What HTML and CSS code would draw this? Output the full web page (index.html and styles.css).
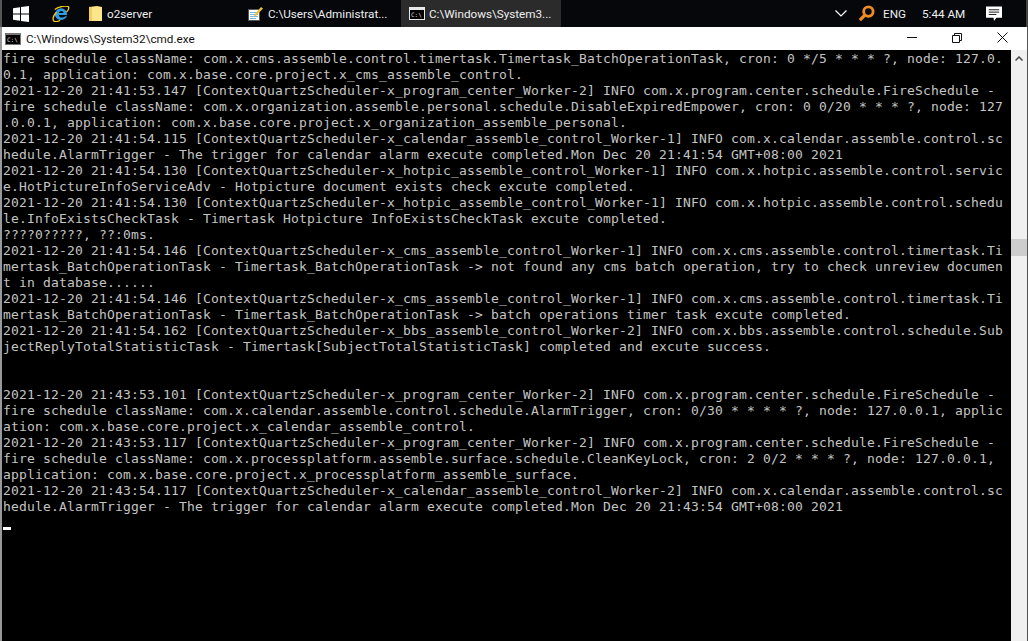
FILE: index.html
```
<!DOCTYPE html>
<html lang="en">
<head>
<meta charset="utf-8">
<title>cmd.exe</title>
<link rel="stylesheet" href="styles.css">
</head>
<body>
<div class="desktop">
  <header class="taskbar">
    <div class="start"><svg width="16" height="16" viewBox="0 0 16 16"><path fill="#fff" d="M0 2.300 7 1.300V7.500H0ZM8 1.100 16 0V7.500H8ZM0 8.500H7V14.700L0 13.700ZM8 8.500H16V16L8 14.900Z"/></svg></div>
    <div class="pin ie"><svg width="18" height="16" viewBox="0 0 20 18"><path fill="none" stroke="#f5c518" stroke-width="1.500" d="M3 4C7 .5 17-1 18.500 1 19.500 3 18 5 16 7"/><path fill="#2f9be0" d="M10 2.500a7 7 0 0 1 7 7.500H7.500c.2 3 4.500 4 7.500 1.500h1.800C14 17 5.500 17 3.500 11.500 2.500 8 4.500 4 8 3ZM7.500 8H13c-.3-3-5-3-5.500 0Z"/><path fill="none" stroke="#f5c518" stroke-width="1.500" d="M5 7C2 10 .5 14 1.500 16.500 2.500 18 6 18 9 16"/></svg></div>
    <div class="task folder-task"><svg class="folder" width="13" height="15" viewBox="0 0 13 15"><path fill="#fde58a" d="M0 1 8 0l5 1v14H0Z"/><path fill="#f3cf63" d="M0 1h3v14H0Z"/></svg><span>o2server</span></div>
    <div class="task notepad-task"><svg width="15" height="14" viewBox="0 0 15 14"><path fill="#fff" stroke="#555" d="M.5 2.500h11v11H.5Z"/><path stroke="#7cb6df" d="M2 5.500h8M2 7.500h8M2 9.500h8M2 11.500h6"/><path fill="#e8c23a" d="M13 0l2 1.500-6.500 7-2.500 1 1-2.500Z"/></svg><span>C:\Users\Administrat...</span></div>
    <div class="task active-task"><svg width="16" height="13" viewBox="0 0 16 13"><rect width="16" height="13" fill="#e8e8e8"/><rect x="1" y="3" width="14" height="9" fill="#000"/><text x="2" y="10" class="icon-text">C:\</text></svg><span>C:\Windows\System3...</span></div>
    <div class="tray">
      <svg class="chevron" width="12" height="7" viewBox="0 0 12 7"><path fill="none" stroke="#fff" stroke-width="1.200" d="M.5.500 6 6l5.500-5.500"/></svg>
      <svg class="lens" width="17" height="17" viewBox="0 0 18 18"><circle cx="11" cy="7" r="5" fill="none" stroke="#f08a24" stroke-width="3"/><path stroke="#f08a24" stroke-width="3.500" d="M7 11 2 16"/></svg>
      <span class="lang">ENG</span>
      <span class="clock">5:44 AM</span>
      <svg class="note" width="16" height="16" viewBox="0 0 17 16"><path fill="#fff" d="M0 0h17v12h-6l-2.500 3.500L8 12H0Z"/><path stroke="#111" d="M3 3.500h11M3 6h11M3 8.500h8"/></svg>
    </div>
  </header>
  <main class="window">
    <div class="titlebar">
      <svg width="16" height="12" viewBox="0 0 16 12"><rect width="16" height="12" fill="#777"/><rect x="1" y="2" width="14" height="9" fill="#000"/><text x="2" y="9" class="icon-text">C:\</text></svg>
      <span class="title">C:\Windows\System32\cmd.exe</span>
      <div class="controls">
        <svg width="10" height="10" viewBox="0 0 10 10"><path stroke="#111" d="M0 4.500h10"/></svg>
        <svg width="10" height="10" viewBox="0 0 10 10"><path fill="none" stroke="#111" d="M.5 2.500h7v7h-7ZM2.500 2.500v-2h7v7h-2"/></svg>
        <svg width="11" height="11" viewBox="0 0 11 11"><path stroke="#111" d="M.5.500l10 10M10.500.500l-10 10"/></svg>
      </div>
    </div>
    <div class="body">
      <pre class="console">fire schedule className: com.x.cms.assemble.control.timertask.Timertask_BatchOperationTask, cron: 0 */5 * * * ?, node: 127.0.
0.1, application: com.x.base.core.project.x_cms_assemble_control.
2021-12-20 21:41:53.147 [ContextQuartzScheduler-x_program_center_Worker-2] INFO com.x.program.center.schedule.FireSchedule -
fire schedule className: com.x.organization.assemble.personal.schedule.DisableExpiredEmpower, cron: 0 0/20 * * * ?, node: 127
.0.0.1, application: com.x.base.core.project.x_organization_assemble_personal.
2021-12-20 21:41:54.115 [ContextQuartzScheduler-x_calendar_assemble_control_Worker-1] INFO com.x.calendar.assemble.control.sc
hedule.AlarmTrigger - The trigger for calendar alarm execute completed.Mon Dec 20 21:41:54 GMT+08:00 2021
2021-12-20 21:41:54.130 [ContextQuartzScheduler-x_hotpic_assemble_control_Worker-1] INFO com.x.hotpic.assemble.control.servic
e.HotPictureInfoServiceAdv - Hotpicture document exists check excute completed.
2021-12-20 21:41:54.130 [ContextQuartzScheduler-x_hotpic_assemble_control_Worker-1] INFO com.x.hotpic.assemble.control.schedu
le.InfoExistsCheckTask - Timertask Hotpicture InfoExistsCheckTask excute completed.
????0?????, ??:0ms.
2021-12-20 21:41:54.146 [ContextQuartzScheduler-x_cms_assemble_control_Worker-1] INFO com.x.cms.assemble.control.timertask.Ti
mertask_BatchOperationTask - Timertask_BatchOperationTask -&gt; not found any cms batch operation, try to check unreview documen
t in database......
2021-12-20 21:41:54.146 [ContextQuartzScheduler-x_cms_assemble_control_Worker-1] INFO com.x.cms.assemble.control.timertask.Ti
mertask_BatchOperationTask - Timertask_BatchOperationTask -&gt; batch operations timer task excute completed.
2021-12-20 21:41:54.162 [ContextQuartzScheduler-x_bbs_assemble_control_Worker-2] INFO com.x.bbs.assemble.control.schedule.Sub
jectReplyTotalStatisticTask - Timertask[SubjectTotalStatisticTask] completed and excute success.


2021-12-20 21:43:53.101 [ContextQuartzScheduler-x_program_center_Worker-2] INFO com.x.program.center.schedule.FireSchedule -
fire schedule className: com.x.calendar.assemble.control.schedule.AlarmTrigger, cron: 0/30 * * * * ?, node: 127.0.0.1, applic
ation: com.x.base.core.project.x_calendar_assemble_control.
2021-12-20 21:43:53.117 [ContextQuartzScheduler-x_program_center_Worker-2] INFO com.x.program.center.schedule.FireSchedule -
fire schedule className: com.x.processplatform.assemble.surface.schedule.CleanKeyLock, cron: 2 0/2 * * * ?, node: 127.0.0.1,
application: com.x.base.core.project.x_processplatform_assemble_surface.
2021-12-20 21:43:54.117 [ContextQuartzScheduler-x_calendar_assemble_control_Worker-2] INFO com.x.calendar.assemble.control.sc
hedule.AlarmTrigger - The trigger for calendar alarm execute completed.Mon Dec 20 21:43:54 GMT+08:00 2021
<span class="cursor"></span></pre>
      <div class="scrollbar">
        <svg class="arrow" width="8" height="5" viewBox="0 0 8 5"><path fill="none" stroke="#444" stroke-width="1.500" d="M.5 4.500 4 1l3.500 3.500"/></svg>
        <div class="thumb"></div>
      </div>
    </div>
  </main>
</div>
</body>
</html>
```
FILE: styles.css
```
* { box-sizing: border-box; }
html, body { margin: 0; height: 100%; overflow: hidden; background: #000; }
.desktop { width: 1028px; height: 641px; display: flex; flex-direction: column; font-family: Roboto, "Noto Sans", sans-serif; }
.taskbar { height: 27px; flex: none; background: #05070b; color: #eee; display: flex; align-items: center; font-size: 11.7px; padding-left: 11px; border-left: 2px solid #555; }
.start { width: 39px; display: flex; }
.pin { width: 37px; display: flex; }
.task { display: flex; align-items: center; gap: 5px; height: 27px; white-space: nowrap; }
.folder-task { width: 159px; }
.notepad-task { width: 153px; }
.active-task { width: 160px; background: #2b2b2b; padding-left: 8px; gap: 4px; }
.tray { margin-left: auto; display: flex; align-items: center; height: 27px; padding-right: 24px; border-right: 2px solid #444; }
.chevron { margin-right: 11px; }
.lens { margin-right: 8px; }
.lang { width: 39px; }
.clock { width: 64px; }
.window { flex: 1; min-height: 0; display: flex; flex-direction: column; background: #fff; border-left: 2px solid #999; border-right: 1px solid #555; }
.titlebar { height: 23px; flex: none; display: flex; align-items: center; padding-left: 3px; background: #fff; color: #111; font-size: 11.7px; }
.title { margin-left: 5px; }
.controls { margin-left: auto; display: flex; align-items: center; gap: 35px; padding-right: 19px; padding-bottom: 2px; }
.body { flex: 1; min-height: 0; display: flex; }
.console { flex: 1; margin: 0; padding: 1px 0 0 1px; background: #000; color: #c4c4c4; font-family: "DejaVu Sans Mono", monospace; font-size: 13px; letter-spacing: .174px; line-height: 16px; overflow: hidden; white-space: pre; }
.cursor { display: inline-block; width: 8px; height: 3px; background: #fff; vertical-align: -3px; }
.scrollbar { width: 16px; flex: none; position: relative; background: #f0f0f0; display: flex; justify-content: center; padding-top: 6px; }
.arrow { display: block; }
.thumb { position: absolute; left: 0; right: 0; top: 189px; height: 17px; background: #cdcdcd; }
.icon-text { fill: #ddd; font-size: 6px; font-family: "DejaVu Sans Mono", monospace; }
```
